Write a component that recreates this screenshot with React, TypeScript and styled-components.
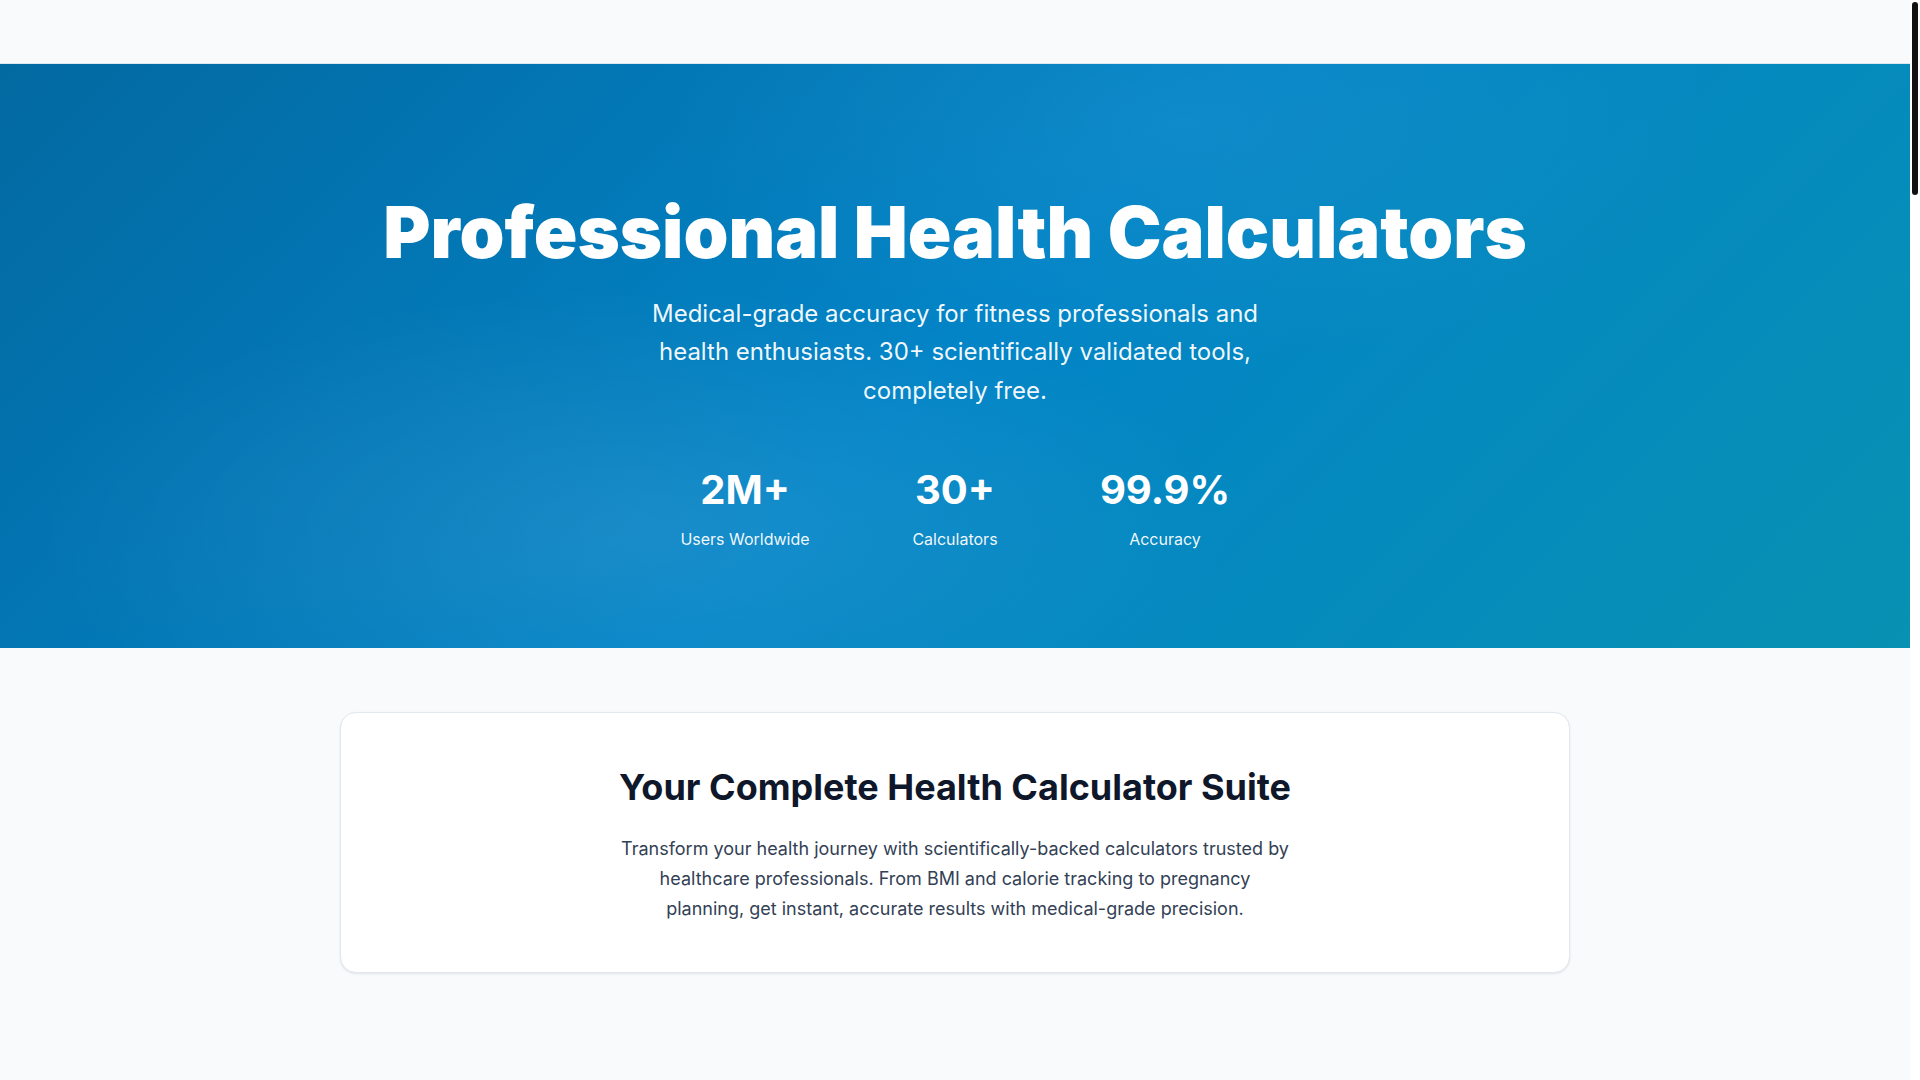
import React from "react";
import styled, { createGlobalStyle } from "styled-components";

const GlobalStyle = createGlobalStyle`
  *, *::before, *::after { box-sizing: border-box; }
  html, body { margin: 0; padding: 0; }
  body {
    background: #f8fafc;
    font-family: Inter, "Noto Sans", "Liberation Sans", sans-serif;
    color: #0f172a;
    -webkit-font-smoothing: antialiased;
  }
`;

const Page = styled.div`
  margin-right: 10px;
  min-height: 1080px;
`;

const ScrollTrack = styled.div`
  position: fixed;
  top: 0;
  right: 0;
  width: 10px;
  height: 100vh;
  background: #ffffff;
  z-index: 10;
`;

const ScrollThumb = styled.div`
  position: absolute;
  top: 2px;
  left: 2px;
  width: 6px;
  height: 193px;
  border-radius: 3px;
  background: #111111;
`;

const Header = styled.header`
  height: 64px;
  background: #f8fafc;
  border-bottom: 1px solid #dbe7f1;
`;

const Hero = styled.section`
  height: 584px;
  padding: 128px 24px 0;
  text-align: center;
  color: #ffffff;
  background:
    radial-gradient(ellipse 45% 60% at 33% 80%, rgba(255, 255, 255, 0.09), rgba(255, 255, 255, 0) 70%),
    radial-gradient(ellipse 40% 60% at 62% 10%, rgba(255, 255, 255, 0.05), rgba(255, 255, 255, 0) 70%),
    linear-gradient(135deg, #0369a1 0%, #0284c7 50%, #0891b2 100%);
`;

const Title = styled.h1`
  margin: 0;
  font-size: 72px;
  line-height: 79px;
  font-weight: 900;
  letter-spacing: 0;
`;

const Subtitle = styled.p`
  margin: 24px auto 0;
  max-width: 672px;
  font-size: 24px;
  line-height: 38.4px;
  font-weight: 400;
  color: rgba(255, 255, 255, 0.95);
`;

const Stats = styled.div`
  margin: 56px auto 0;
  display: grid;
  grid-template-columns: repeat(3, 178px);
  column-gap: 32px;
  justify-content: center;
`;

const Stat = styled.div`
  display: flex;
  flex-direction: column;
  align-items: center;
`;

const StatValue = styled.div`
  font-size: 40px;
  line-height: 48px;
  font-weight: 700;
`;

const StatLabel = styled.div`
  margin-top: 14px;
  font-size: 16px;
  line-height: 22px;
  font-weight: 400;
  color: rgba(255, 255, 255, 0.95);
`;

const Main = styled.main`
  padding: 64px 24px 96px;
`;

const Card = styled.div`
  max-width: 1230px;
  margin: 0 auto;
  padding: 47px 48px 48px;
  background: #ffffff;
  border: 1px solid #e2e8f0;
  border-radius: 16px;
  box-shadow: 0 1px 3px rgba(15, 23, 42, 0.06), 0 1px 2px rgba(15, 23, 42, 0.04);
  text-align: center;
`;

const CardTitle = styled.h2`
  margin: 0;
  font-size: 36px;
  line-height: 54px;
  font-weight: 700;
  color: #0f172a;
`;

const CardText = styled.p`
  margin: 20px auto 0;
  max-width: 672px;
  font-size: 18px;
  line-height: 30px;
  color: #334155;
`;

const stats = [
  { value: "2M+", label: "Users Worldwide" },
  { value: "30+", label: "Calculators" },
  { value: "99.9%", label: "Accuracy" },
];

export default function App() {
  return (
    <>
      <GlobalStyle />
      <Page>
        <Header />
        <Hero>
          <Title>Professional Health Calculators</Title>
          <Subtitle>
            Medical-grade accuracy for fitness professionals and health enthusiasts. 30+
            scientifically validated tools, completely free.
          </Subtitle>
          <Stats>
            {stats.map((s) => (
              <Stat key={s.label}>
                <StatValue>{s.value}</StatValue>
                <StatLabel>{s.label}</StatLabel>
              </Stat>
            ))}
          </Stats>
        </Hero>
        <Main>
          <Card>
            <CardTitle>Your Complete Health Calculator Suite</CardTitle>
            <CardText>
              Transform your health journey with scientifically-backed calculators trusted by
              healthcare professionals. From BMI and calorie tracking to pregnancy planning, get
              instant, accurate results with medical-grade precision.
            </CardText>
          </Card>
        </Main>
      </Page>
      <ScrollTrack>
        <ScrollThumb />
      </ScrollTrack>
    </>
  );
}
